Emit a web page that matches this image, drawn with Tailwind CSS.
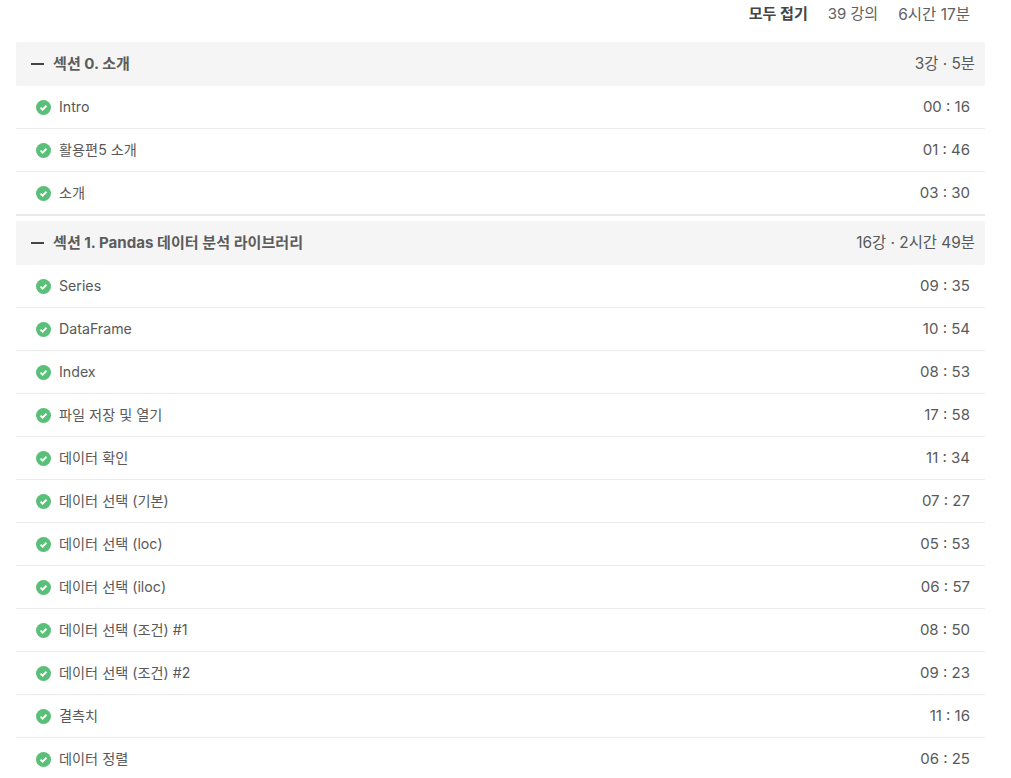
<!DOCTYPE html>
<html lang="ko">
<head>
  <meta charset="UTF-8">
  <title>커리큘럼</title>
  <script src="https://cdn.jsdelivr.net/npm/@tailwindcss/browser@4"></script>
</head>
<body class="bg-white overflow-hidden h-[778px] font-['Inter','Noto_Sans_CJK_KR',sans-serif] text-[#595959] text-[14.2px]">
  <div class="pl-4 pr-[26px] w-[1011px]">
    <!-- Summary -->
    <div class="flex justify-end items-center h-[29px] gap-5 pr-[15px] mb-[13px] text-[#616161] text-[15px]">
      <span class="font-bold text-[#454545] text-[15.1px]">모두 접기</span>
      <span>39 강의</span>
      <span class="text-[15.5px]">6시간 17분</span>
    </div>

    <!-- Section 0 -->
    <div class="flex justify-between items-center h-11 pl-[15px] pr-[10px] bg-[#f5f5f5] rounded-[2px]">
      <div class="flex items-center gap-[9px] font-bold text-[#5c5c5c] text-[15.1px]">
        <span class="w-[13px] h-[2px] bg-[#454545]"></span>
        <span>섹션 0. 소개</span>
      </div>
      <span class="text-[15.4px]">3강 · 5분</span>
    </div>
    <div class="border-b-2 border-[#e9e9e9] mb-[5px]">
      <div class="flex justify-between items-center h-[43px] pl-5 pr-[15px] border-b border-[#ececec]">
        <div class="flex items-center gap-2">
          <svg class="w-[15px] h-[15px] mt-px" viewBox="0 0 16 16"><circle cx="8" cy="8" r="8" fill="#5abf78"/><path d="M4.8 8.2l2.2 2.1 4.2-4.2" fill="none" stroke="#fff" stroke-width="2"/></svg>
          <span class="pb-px">Intro</span>
        </div>
        <span class="text-[15px]">00 : 16</span>
      </div>
      <div class="flex justify-between items-center h-[43px] pl-5 pr-[15px] border-b border-[#ececec]">
        <div class="flex items-center gap-2">
          <svg class="w-[15px] h-[15px] mt-px" viewBox="0 0 16 16"><circle cx="8" cy="8" r="8" fill="#5abf78"/><path d="M4.8 8.2l2.2 2.1 4.2-4.2" fill="none" stroke="#fff" stroke-width="2"/></svg>
          <span class="pb-px">활용편5 소개</span>
        </div>
        <span class="text-[15px]">01 : 46</span>
      </div>
      <div class="flex justify-between items-center h-[42px] pl-5 pr-[15px]">
        <div class="flex items-center gap-2">
          <svg class="w-[15px] h-[15px] mt-px" viewBox="0 0 16 16"><circle cx="8" cy="8" r="8" fill="#5abf78"/><path d="M4.8 8.2l2.2 2.1 4.2-4.2" fill="none" stroke="#fff" stroke-width="2"/></svg>
          <span class="pb-px">소개</span>
        </div>
        <span class="text-[15px]">03 : 30</span>
      </div>
    </div>

    <!-- Section 1 -->
    <div class="flex justify-between items-center h-11 pl-[15px] pr-[10px] bg-[#f5f5f5] rounded-[2px]">
      <div class="flex items-center gap-[9px] font-bold text-[#5c5c5c] text-[15.1px]">
        <span class="w-[13px] h-[2px] bg-[#454545]"></span>
        <span>섹션 1. Pandas 데이터 분석 라이브러리</span>
      </div>
      <span class="text-[15.4px]">16강 · 2시간 49분</span>
    </div>
    <div>
      <div class="flex justify-between items-center h-[43px] pl-5 pr-[15px] border-b border-[#ececec]">
        <div class="flex items-center gap-2">
          <svg class="w-[15px] h-[15px] mt-px" viewBox="0 0 16 16"><circle cx="8" cy="8" r="8" fill="#5abf78"/><path d="M4.8 8.2l2.2 2.1 4.2-4.2" fill="none" stroke="#fff" stroke-width="2"/></svg>
          <span class="pb-px">Series</span>
        </div>
        <span class="text-[15px]">09 : 35</span>
      </div>
      <div class="flex justify-between items-center h-[43px] pl-5 pr-[15px] border-b border-[#ececec]">
        <div class="flex items-center gap-2">
          <svg class="w-[15px] h-[15px] mt-px" viewBox="0 0 16 16"><circle cx="8" cy="8" r="8" fill="#5abf78"/><path d="M4.8 8.2l2.2 2.1 4.2-4.2" fill="none" stroke="#fff" stroke-width="2"/></svg>
          <span class="pb-px">DataFrame</span>
        </div>
        <span class="text-[15px]">10 : 54</span>
      </div>
      <div class="flex justify-between items-center h-[43px] pl-5 pr-[15px] border-b border-[#ececec]">
        <div class="flex items-center gap-2">
          <svg class="w-[15px] h-[15px] mt-px" viewBox="0 0 16 16"><circle cx="8" cy="8" r="8" fill="#5abf78"/><path d="M4.8 8.2l2.2 2.1 4.2-4.2" fill="none" stroke="#fff" stroke-width="2"/></svg>
          <span class="pb-px">Index</span>
        </div>
        <span class="text-[15px]">08 : 53</span>
      </div>
      <div class="flex justify-between items-center h-[43px] pl-5 pr-[15px] border-b border-[#ececec]">
        <div class="flex items-center gap-2">
          <svg class="w-[15px] h-[15px] mt-px" viewBox="0 0 16 16"><circle cx="8" cy="8" r="8" fill="#5abf78"/><path d="M4.8 8.2l2.2 2.1 4.2-4.2" fill="none" stroke="#fff" stroke-width="2"/></svg>
          <span class="pb-px">파일 저장 및 열기</span>
        </div>
        <span class="text-[15px]">17 : 58</span>
      </div>
      <div class="flex justify-between items-center h-[43px] pl-5 pr-[15px] border-b border-[#ececec]">
        <div class="flex items-center gap-2">
          <svg class="w-[15px] h-[15px] mt-px" viewBox="0 0 16 16"><circle cx="8" cy="8" r="8" fill="#5abf78"/><path d="M4.8 8.2l2.2 2.1 4.2-4.2" fill="none" stroke="#fff" stroke-width="2"/></svg>
          <span class="pb-px">데이터 확인</span>
        </div>
        <span class="text-[15px]">11 : 34</span>
      </div>
      <div class="flex justify-between items-center h-[43px] pl-5 pr-[15px] border-b border-[#ececec]">
        <div class="flex items-center gap-2">
          <svg class="w-[15px] h-[15px] mt-px" viewBox="0 0 16 16"><circle cx="8" cy="8" r="8" fill="#5abf78"/><path d="M4.8 8.2l2.2 2.1 4.2-4.2" fill="none" stroke="#fff" stroke-width="2"/></svg>
          <span class="pb-px">데이터 선택 (기본)</span>
        </div>
        <span class="text-[15px]">07 : 27</span>
      </div>
      <div class="flex justify-between items-center h-[43px] pl-5 pr-[15px] border-b border-[#ececec]">
        <div class="flex items-center gap-2">
          <svg class="w-[15px] h-[15px] mt-px" viewBox="0 0 16 16"><circle cx="8" cy="8" r="8" fill="#5abf78"/><path d="M4.8 8.2l2.2 2.1 4.2-4.2" fill="none" stroke="#fff" stroke-width="2"/></svg>
          <span class="pb-px">데이터 선택 (loc)</span>
        </div>
        <span class="text-[15px]">05 : 53</span>
      </div>
      <div class="flex justify-between items-center h-[43px] pl-5 pr-[15px] border-b border-[#ececec]">
        <div class="flex items-center gap-2">
          <svg class="w-[15px] h-[15px] mt-px" viewBox="0 0 16 16"><circle cx="8" cy="8" r="8" fill="#5abf78"/><path d="M4.8 8.2l2.2 2.1 4.2-4.2" fill="none" stroke="#fff" stroke-width="2"/></svg>
          <span class="pb-px">데이터 선택 (iloc)</span>
        </div>
        <span class="text-[15px]">06 : 57</span>
      </div>
      <div class="flex justify-between items-center h-[43px] pl-5 pr-[15px] border-b border-[#ececec]">
        <div class="flex items-center gap-2">
          <svg class="w-[15px] h-[15px] mt-px" viewBox="0 0 16 16"><circle cx="8" cy="8" r="8" fill="#5abf78"/><path d="M4.8 8.2l2.2 2.1 4.2-4.2" fill="none" stroke="#fff" stroke-width="2"/></svg>
          <span class="pb-px">데이터 선택 (조건) #1</span>
        </div>
        <span class="text-[15px]">08 : 50</span>
      </div>
      <div class="flex justify-between items-center h-[43px] pl-5 pr-[15px] border-b border-[#ececec]">
        <div class="flex items-center gap-2">
          <svg class="w-[15px] h-[15px] mt-px" viewBox="0 0 16 16"><circle cx="8" cy="8" r="8" fill="#5abf78"/><path d="M4.8 8.2l2.2 2.1 4.2-4.2" fill="none" stroke="#fff" stroke-width="2"/></svg>
          <span class="pb-px">데이터 선택 (조건) #2</span>
        </div>
        <span class="text-[15px]">09 : 23</span>
      </div>
      <div class="flex justify-between items-center h-[43px] pl-5 pr-[15px] border-b border-[#ececec]">
        <div class="flex items-center gap-2">
          <svg class="w-[15px] h-[15px] mt-px" viewBox="0 0 16 16"><circle cx="8" cy="8" r="8" fill="#5abf78"/><path d="M4.8 8.2l2.2 2.1 4.2-4.2" fill="none" stroke="#fff" stroke-width="2"/></svg>
          <span class="pb-px">결측치</span>
        </div>
        <span class="text-[15px]">11 : 16</span>
      </div>
      <div class="flex justify-between items-center h-[43px] pl-5 pr-[15px] border-b border-[#ececec]">
        <div class="flex items-center gap-2">
          <svg class="w-[15px] h-[15px] mt-px" viewBox="0 0 16 16"><circle cx="8" cy="8" r="8" fill="#5abf78"/><path d="M4.8 8.2l2.2 2.1 4.2-4.2" fill="none" stroke="#fff" stroke-width="2"/></svg>
          <span class="pb-px">데이터 정렬</span>
        </div>
        <span class="text-[15px]">06 : 25</span>
      </div>
    </div>
  </div>
</body>
</html>
